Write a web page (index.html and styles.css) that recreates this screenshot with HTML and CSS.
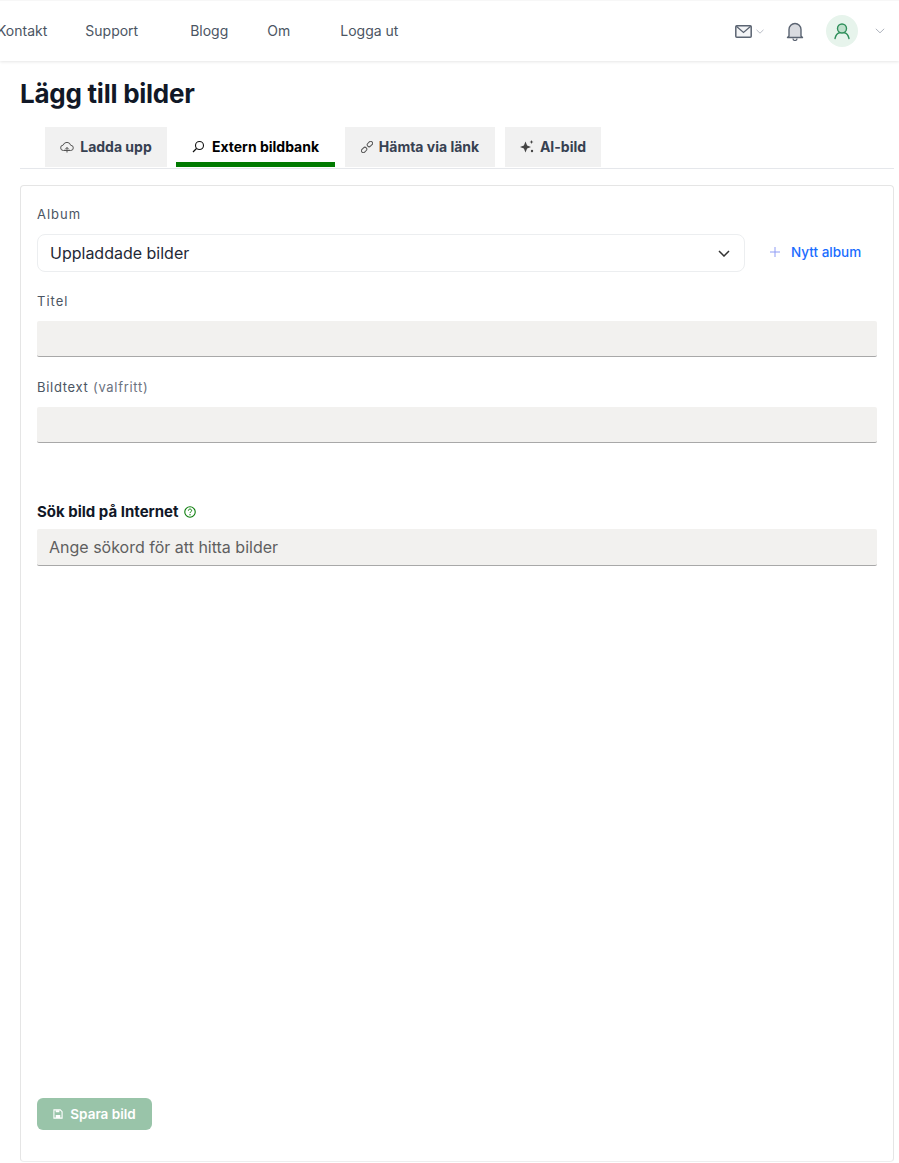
FILE: index.html
```html
<!DOCTYPE html>
<html lang="sv">
<head>
<meta charset="utf-8">
<title>Lägg till bilder</title>
<link rel="stylesheet" href="styles.css">
</head>
<body>
<header class="topbar">
  <nav class="nav">
    <a class="nav-link kontakt">Kontakt</a>
    <a class="nav-link support">Support</a>
    <a class="nav-link blogg">Blogg</a>
    <a class="nav-link om">Om</a>
    <a class="nav-link">Logga ut</a>
  </nav>
  <div class="tools">
    <svg class="ico-mail" width="17" height="13" viewBox="0 0 17 13"><rect x=".8" y=".8" width="15.400" height="11.400" rx="1" fill="#f3f4f6" stroke="#5b6472" stroke-width="1.500"/><path d="M1.300 1.300 8.500 7.500l7.200-6.200" fill="none" stroke="#5b6472" stroke-width="1.300"/></svg>
    <svg class="ico-chev-small" width="8" height="5" viewBox="0 0 8 5"><path d="M.5.800 4 4.200 7.500.8" fill="none" stroke="#b9bdc6" stroke-width="1"/></svg>
    <svg class="ico-bell" width="18" height="19" viewBox="0 0 18 19"><path d="M3 14V7.500a6 6 0 0 1 12 0V14l1.500 1.500h-15z" fill="#d9dbe0" stroke="#5b6472" stroke-width="1.400" stroke-linejoin="round"/><path d="M7 16.500a2 2 0 0 0 4 0" fill="none" stroke="#5b6472" stroke-width="1.200"/></svg>
    <span class="avatar"><svg width="18" height="18" viewBox="0 0 18 18"><circle cx="9" cy="6.500" r="4.500" fill="#bfe0cc" stroke="#2f8f5b" stroke-width="1.400"/><path d="M2 16.500c.8-3.500 3-5.500 4.500-5.800M16 16.500c-.8-3.500-3-5.500-4.500-5.800" fill="none" stroke="#2f8f5b" stroke-width="1.400" stroke-linecap="round"/></svg></span>
    <svg class="ico-chev-user" width="10" height="6" viewBox="0 0 10 6"><path d="M.8.800 5 4.800 9.200.8" fill="none" stroke="#aeb3bd" stroke-width="1"/></svg>
  </div>
</header>

<main class="page">
  <h1 class="title">Lägg till bilder</h1>
  <div class="tabs">
    <a class="tab tab-upload"><svg width="14" height="12" viewBox="0 0 14 12"><path d="M3.500 9.500a2.700 2.700 0 0 1-.3-5.400 3.900 3.900 0 0 1 7.500.2 2.600 2.600 0 0 1 0 5.200z" fill="none" stroke="#555" stroke-width="1"/><path d="M7 11.500V6.500M5 8.500l2-2 2 2" fill="none" stroke="#555" stroke-width="1"/></svg>Ladda upp</a>
    <a class="tab active"><svg width="13" height="13" viewBox="0 0 13 13"><circle cx="7.500" cy="5.500" r="4" fill="none" stroke="#111" stroke-width="1.100"/><path d="M4.500 8.500 1 12" stroke="#111" stroke-width="1.300"/></svg>Extern bildbank</a>
    <a class="tab tab-link"><svg width="12" height="12" viewBox="0 0 12 12"><rect x="5.600" y=".9" width="6" height="3.800" rx="1.900" transform="rotate(-45 8.600 2.800) translate(0 .4)" fill="none" stroke="#555" stroke-width="1"/><rect x=".4" y="7.300" width="6" height="3.800" rx="1.900" transform="rotate(-45 3.400 9.200) translate(0 -.4)" fill="none" stroke="#555" stroke-width="1"/></svg>Hämta via länk</a>
    <a class="tab tab-ai"><svg width="14" height="13" viewBox="0 0 14 13"><path d="M5.500 1.500 7.100 5.400 11 7 7.100 8.600 5.500 12.500 3.900 8.600 0 7 3.900 5.400z" fill="#444"/><path d="M11.500 0 12.100 1.400 13.500 2 12.100 2.600 11.500 4 10.900 2.600 9.500 2 10.900 1.400z" fill="#444"/><circle cx="12" cy="11" r="1.200" fill="#444"/></svg>AI-bild</a>
  </div>

  <form class="card">
    <label class="label">Album</label>
    <div class="album-row">
      <div class="select">
        <span>Uppladdade bilder</span>
        <svg width="12" height="7" viewBox="0 0 12 7"><path d="M1 1l5 5 5-5" fill="none" stroke="#333" stroke-width="1.500"/></svg>
      </div>
      <a class="new-album"><svg width="10" height="10" viewBox="0 0 10 10"><path d="M5 0v10M0 5h10" stroke="#8f9cf5" stroke-width="1"/></svg>Nytt album</a>
    </div>

    <label class="label label-title">Titel</label>
    <div class="input"></div>

    <label class="label label-caption">Bildtext <span class="optional">(valfritt)</span></label>
    <div class="input"></div>

    <div class="search-label">Sök bild på Internet
      <svg width="12" height="12" viewBox="0 0 11 11"><circle cx="5.500" cy="5.500" r="4.800" fill="none" stroke="#0a7d0a" stroke-width="1"/><path d="M4 4.300c0-2 3-2 3 0 0 1-1.500 1-1.500 2.200" fill="none" stroke="#0a7d0a" stroke-width=".9"/><circle cx="5.500" cy="8" r=".6" fill="#0a7d0a"/></svg>
    </div>
    <div class="input input-search">Ange sökord för att hitta bilder</div>

    <button class="save" type="button"><svg width="10" height="10" viewBox="0 0 11 11"><path d="M1 1h7l2 2v7H1z" fill="none" stroke="#fff" stroke-width="1.200"/><path d="M3 1.500h4v2H3zM3 6.500h5V10H3z" fill="#fff"/></svg>Spara bild</button>
  </form>
</main>
</body>
</html>
```

FILE: styles.css
```css
* { box-sizing: border-box; }
html, body { margin: 0; padding: 0; height: 1163px; overflow: hidden; background: #fff; }
body { font-family: Inter, "Liberation Sans", sans-serif; color: #111827; }

.topbar {
  height: 61px;
  display: flex;
  align-items: center;
  justify-content: space-between;
  box-shadow: 0 1px 3px rgba(0,0,0,.1);
  border-top: 1px solid #f7f7f7;
}
.nav { display: flex; margin-left: -3px; }
.nav-link { font-size: 14px; font-weight: 400; color: #4b5563; line-height: 20px; }
.kontakt { margin-right: 38px; }
.support { margin-right: 52px; }
.blogg { margin-right: 39px; }
.om { margin-right: 50px; }

.tools { display: flex; align-items: center; margin-right: 14px; }
.ico-mail { margin-right: 4px; }
.ico-chev-small { margin-right: 22px; }
.ico-bell { margin-right: 22px; }
.avatar {
  width: 32px; height: 32px; border-radius: 50%;
  background: #e7f4ec;
  display: flex; align-items: center; justify-content: center;
  margin-right: 17px;
}

.page { padding: 0 5px 0 20px; }
.title {
  margin: 16px 0 17px;
  font-size: 26px;
  line-height: 33px;
  font-weight: 700;
  color: #111827;
  letter-spacing: -0.25px;
}
.tabs {
  display: flex;
  gap: 10px;
  padding-left: 25px;
  height: 42px;
  border-bottom: 1px solid #e5e7eb;
  margin-bottom: 16px;
}
.tab {
  height: 40px;
  padding-bottom: 1px;
  display: flex;
  align-items: center;
  justify-content: center;
  gap: 6px;
  background: #f1f1f1;
  color: #374151;
  font-size: 14px;
  font-weight: 700;
}
.tab-upload { width: 122px; }
.active {
  width: 159px;
  margin-left: -1px;
  background: #fff;
  color: #000;
  border-bottom: 5px solid #007a00;
  padding: 4px 0 0;
  gap: 7px;
}
.tab-link { width: 150px; }
.tab-ai { width: 96px; }

.card {
  height: 977px;
  border: 1px solid #e5e5e5;
  border-bottom-color: #eeeeee;
  border-radius: 4px;
  padding: 20px 16px 31px;
  display: flex;
  flex-direction: column;
}
.label {
  font-size: 13px;
  line-height: 16px;
  color: #4b5563;
  letter-spacing: 1px;
}
.album-row { display: flex; align-items: center; margin-top: 12px; }
.select {
  width: 708px;
  height: 38px;
  border: 1px solid #eceef0;
  border-radius: 8px;
  padding: 0 14px 0 12px;
  display: flex;
  align-items: center;
  justify-content: space-between;
  font-size: 16px;
  color: #1f2937;
}
.new-album {
  display: flex;
  align-items: center;
  gap: 12px;
  margin-left: 25px;
  font-size: 13.5px;
  font-weight: 500;
  color: #1a6cff;
  margin-top: -2px;
}
.new-album svg { margin-right: -1px; }
.label-title { margin-top: 21px; }
.label-caption { margin-top: 22px; letter-spacing: .7px; }
.optional { color: #6b7280; }
.input {
  height: 36px;
  margin-top: 12px;
  background: #f2f1ef;
  border-bottom: 1px solid #a8a8a8;
  border-radius: 2px;
}
.search-label {
  margin-top: 60px;
  font-size: 15px;
  line-height: 18px;
  font-weight: 700;
  color: #111827;
  display: flex;
  align-items: center;
  gap: 5px;
}
.input-search {
  height: 37px;
  margin-top: 8px;
  padding-left: 12px;
  font-size: 16px;
  line-height: 36px;
  color: #5f5f5f;
}
.save {
  margin-top: auto;
  width: 115px;
  height: 32px;
  padding: 0 0 1px;
  border: 0;
  border-radius: 6px;
  background: #99c4a9;
  color: #fff;
  font-family: inherit;
  font-size: 13.5px;
  font-weight: 600;
  display: flex;
  align-items: center;
  justify-content: center;
  gap: 7px;
}
```
